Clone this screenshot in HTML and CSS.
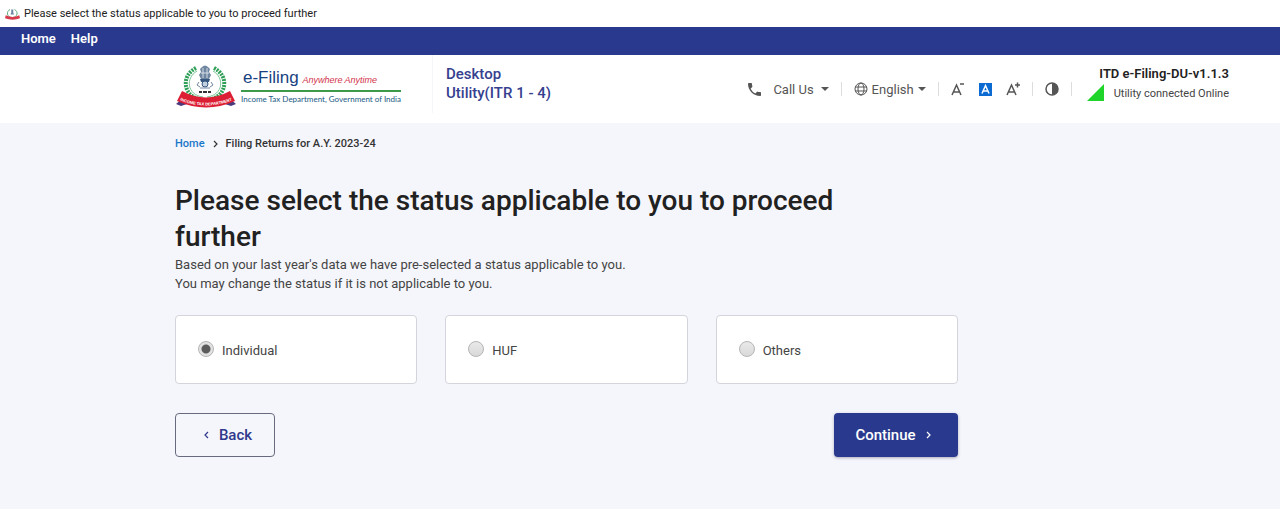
FILE: index.html
```html
<!DOCTYPE html>
<html lang="en">
<head>
<title>Please select the status applicable to you to proceed further</title>
<meta charset="utf-8">
<link rel="stylesheet" href="styles.css">
</head>
<body>
<div class="titlebar">
<svg class="favicon" viewBox="0 0 60 44" aria-hidden="true">
<path d="M20 4C4 12 7 34 27 36M38 4C54 12 51 34 31 36" fill="none" stroke="#5fa87c" stroke-width="4"/>
<path d="M25 4h8v12l3 8H22l3-8z" fill="#6f86a0"/>
<path d="M3 27Q30 40 57 27L60 39Q30 50 0 39z" fill="#d8394b"/>
</svg>
<span>Please select the status applicable to you to proceed further</span>
</div>

<nav class="menu">
<a href="#">Home</a>
<a href="#">Help</a>
</nav>

<header class="header">
<a class="logo" href="#">
<svg class="logo-emblem" viewBox="0 0 60 44" aria-hidden="true">
<path d="M20 4C4 12 7 34 27 36M38 4C54 12 51 34 31 36" fill="none" stroke="#2f9f57" stroke-width="4" stroke-dasharray="2 1"/>
<path d="M21 7C9 14 11 31 27 33M37 7C49 14 47 31 31 33" fill="none" stroke="#7cc596" stroke-width="1"/>
<path d="M26 3q3-3 6 0l2 2-1 3 2 3-2 4h-8l-2-4 2-3-1-3z" fill="#6f86a0"/>
<path d="M27 4v10M31 4v10M25 9h8" stroke="#d5dde7" stroke-width="1"/>
<path d="M24 15h10l-1 3h-8z" fill="#34567f"/>
<circle cx="29" cy="20" r="3" fill="#c3d0df" stroke="#34567f"/>
<path d="M23 18l-2 3 3 2M35 18l2 3-3 2M24 24h10" fill="none" stroke="#6f86a0" stroke-width="1"/>
<path d="M23 28h3m1 0h4m1 0h3" stroke="#333" stroke-width="2"/>
<path d="M0 40l7-6 4 6-6 2zM60 40l-7-6-4 6 6 2z" fill="#4b3a7c"/>
<path d="M6 27Q30 40 54 27L59 37Q30 50 1 37z" fill="#dc1f35"/>
<path id="ribbon" d="M3 36Q30 47 57 36" fill="none"/>
<text class="ribbon-text"><textPath href="#ribbon" startOffset="50%" text-anchor="middle">INCOME TAX DEPARTMENT</textPath></text>
</svg>
<span class="logo-text">
<span class="logo-top"><span class="logo-name">e-Filing</span> <em>Anywhere Anytime</em></span>
<span class="logo-dept">Income Tax Department, Government of India</span>
</span>
</a>
<div class="product">Desktop<br>Utility(ITR 1 - 4)</div>
<div class="tools">
<button class="tool call">
<svg class="icon-phone" viewBox="0 0 18 18" aria-hidden="true"><path d="M3.6 7.8a15 15 0 0 0 6.6 6.6l2.2-2.2a1 1 0 0 1 1-.2c1.100.4 2.300.6 3.600.6.6 0 1 .4 1 1V17c0 .6-.4 1-1 1C7.600 18 0 10.400 0 1c0-.6.4-1 1-1h3.500c.6 0 1 .4 1 1 0 1.300.2 2.500.6 3.600.1.3 0 .7-.3 1z"/></svg>
<span>Call Us</span><i class="caret"></i>
</button>
<button class="tool lang">
<svg class="icon-globe" viewBox="0 0 14 14" aria-hidden="true"><circle cx="7" cy="7" r="6"/><ellipse cx="7" cy="7" rx="3" ry="6"/><path d="M1 5h12M1 9h12"/></svg>
<span>English</span><i class="caret"></i>
</button>
<div class="tool sizes">
<button aria-label="Decrease text size"><svg width="14" height="14" viewBox="0 0 14 14"><path d="M1 13L5.500 3 10 13M2.500 10h6M9 2h4"/></svg></button>
<button class="current" aria-label="Normal text size"><svg width="13" height="13" viewBox="0 0 13 13"><path d="M3 10.500L6.500 2.500 10 10.500M4.500 8h4"/></svg></button>
<button aria-label="Increase text size"><svg width="14" height="14" viewBox="0 0 14 14"><path d="M1 13L5.500 3 10 13M2.500 10h6M9 3h5M11.500.5v5"/></svg></button>
</div>
<button class="tool contrast" aria-label="Contrast">
<svg width="14" height="14" viewBox="0 0 14 14"><circle cx="7" cy="7" r="6" fill="none" stroke="#555" stroke-width="1.500"/><path d="M7 1a6 6 0 0 1 0 12z" fill="#555"/></svg>
</button>
</div>
<div class="status">
<strong>ITD e-Filing-DU-v1.1.3</strong>
<svg class="signal" viewBox="0 0 17 17" aria-hidden="true"><path d="M17 0v17H0z" fill="#1fd42a"/></svg>
<span>Utility connected Online</span>
</div>
</header>

<main class="content">
<nav class="breadcrumb">
<a href="#">Home</a>
<svg class="chevron" viewBox="0 0 5 8" aria-hidden="true"><path d="M1 1l3 3-3 3"/></svg>
<span>Filing Returns for A.Y. 2023-24</span>
</nav>
<h1>Please select the status applicable to you to proceed further</h1>
<p>Based on your last year's data we have pre-selected a status applicable to you.<br>You may change the status if it is not applicable to you.</p>
<form>
<div class="options">
<label class="option"><input type="radio" name="status" value="individual" checked><span>Individual</span></label>
<label class="option"><input type="radio" name="status" value="huf"><span>HUF</span></label>
<label class="option"><input type="radio" name="status" value="others"><span>Others</span></label>
</div>
<div class="actions">
<button type="button" class="btn back"><svg class="chevron" viewBox="0 0 5 8" aria-hidden="true"><path d="M4 1L1 4l3 3"/></svg>Back</button>
<button type="button" class="btn continue">Continue<svg class="chevron" viewBox="0 0 5 8" aria-hidden="true"><path d="M1 1l3 3-3 3"/></svg></button>
</div>
</form>
</main>
</body>
</html>
```

FILE: styles.css
```css
* {
box-sizing: border-box;
}
body {
margin: 0;
font-family: Roboto, sans-serif;
font-size: 13px;
color: #444;
background-color: #f5f6fb;
}
a {
text-decoration: none;
}
button {
font-family: inherit;
padding: 0;
border: 0;
background: none;
cursor: pointer;
}

/* window title and menu */
.titlebar {
display: flex;
align-items: center;
gap: 4px;
height: 27px;
padding: 0 5px;
font-size: 11px;
color: #222;
background-color: white;
}
.favicon {
width: 15px;
height: 12px;
}
.menu {
display: flex;
gap: 15px;
padding: 2px 21px 6px;
background-color: #293a8e;
}
.menu a {
font-size: 13px;
font-weight: 600;
line-height: 20px;
color: white;
}

/* header */
.header {
display: flex;
align-items: center;
height: 68px;
padding: 0 51px 0 175px;
background-color: white;
}
.logo {
display: flex;
flex-shrink: 0;
align-items: center;
gap: 4px;
width: 257px;
padding-bottom: 7px;
}
.logo-emblem {
flex-shrink: 0;
width: 62px;
height: 44px;
}
.ribbon-text {
font-family: "Liberation Sans", sans-serif;
font-size: 4px;
font-weight: bold;
fill: white;
}
.logo-text {
font-family: "Liberation Sans", sans-serif;
white-space: nowrap;
}
.logo-top {
display: block;
line-height: 20px;
padding: 2px 0 0 2px;
border-bottom: 2px solid #3c9a4a;
}
.logo-name {
font-size: 17px;
color: #17427f;
}
.logo-top em {
font-size: 9px;
color: #d2324b;
}
.logo-dept {
display: block;
font-family: Lato, sans-serif;
font-size: 8px;
line-height: 14px;
color: #205a84;
}
.product {
padding: 10px 0 10px 13px;
border-left: 1px solid #f5f6f8;
font-size: 15px;
font-weight: 500;
line-height: 19px;
color: #35408f;
margin-bottom: 10px;
}
.tools {
display: flex;
align-items: center;
margin-left: auto;
color: #555;
}
.tool {
display: flex;
align-items: center;
height: 14px;
border-right: 1px solid #ddd;
font-size: 13px;
color: #555;
}
.call {
gap: 7px;
padding-right: 12px;
}
.call span {
margin-left: 5px;
}
.icon-phone {
width: 13px;
height: 13px;
fill: #555;
}
.caret {
border: 4px solid transparent;
border-top-color: #555;
border-bottom: 0;
}
.lang {
gap: 4px;
padding: 0 12px;
}
.icon-globe {
width: 14px;
height: 14px;
fill: none;
stroke: #555;
}
.sizes {
gap: 14px;
padding: 0 12px;
}
.sizes button {
display: flex;
}
.sizes svg {
fill: none;
stroke: #555;
stroke-width: 1.5;
}
.sizes .current {
background-color: #0b6bd3;
}
.sizes .current svg {
stroke: white;
}
.contrast {
padding: 0 12px;
}
.status {
display: grid;
grid-template-columns: 17px auto;
column-gap: 10px;
margin: 0 0 10px 15px;
line-height: 20px;
}
.signal {
width: 17px;
height: 17px;
}
.status strong {
grid-column: 1 / 3;
justify-self: end;
font-size: 13px;
font-weight: 600;
color: #222;
}
.status span {
font-size: 11px;
}

/* page */
.content {
padding: 12px 51px 50px 175px;
}
.breadcrumb {
display: flex;
align-items: center;
gap: 8px;
font-size: 11px;
font-weight: 500;
line-height: 18px;
color: #333;
}
.breadcrumb a {
color: #1a77c9;
}
.chevron {
width: 5px;
height: 8px;
fill: none;
stroke: currentColor;
stroke-width: 1.2;
}
h1 {
max-width: 700px;
margin: 30px 0 0;
font-size: 28px;
font-weight: 500;
line-height: 36px;
color: #212121;
}
p {
margin: 0;
font-size: 13px;
line-height: 19px;
}
form {
max-width: 783px;
}
.options {
display: grid;
grid-template-columns: repeat(3, 1fr);
gap: 28px;
margin-top: 22px;
}
.option {
display: flex;
align-items: center;
gap: 8px;
height: 69px;
padding: 0 22px;
border: 1px solid #d4d5dc;
border-radius: 4px;
background-color: white;
}
.option input {
appearance: none;
width: 16px;
height: 16px;
margin: 0 0 2px;
border: 1px solid #b5b5b5;
border-radius: 50%;
background: linear-gradient(#e9e9e9, #d9d9d9);
}
.option input:checked {
background: radial-gradient(circle, #5c5c5c 4px, #e2e2e2 5px);
}
.option span {
margin-top: 2px;
}
.actions {
display: flex;
justify-content: space-between;
margin-top: 29px;
}
.btn {
display: flex;
align-items: center;
justify-content: center;
gap: 10px;
height: 44px;
border-radius: 4px;
font-size: 15px;
font-weight: 500;
}
.back {
width: 100px;
padding-left: 6px;
border: 1px solid #686b80;
color: #2f388c;
}
.continue {
width: 124px;
padding-right: 6px;
color: white;
background-color: #293a8e;
box-shadow: 0 1px 3px #aab;
}
```
